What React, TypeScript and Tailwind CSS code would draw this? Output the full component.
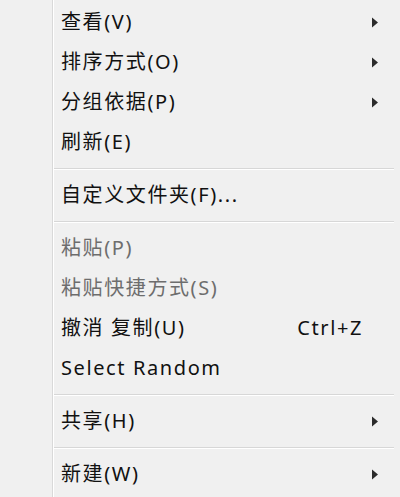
import React from 'react'

type Item =
  | { kind: 'item'; label: string; sub?: boolean; disabled?: boolean; shortcut?: string }
  | { kind: 'sep' }

const MENU: Item[] = [
  { kind: 'item', label: '查看(V)', sub: true },
  { kind: 'item', label: '排序方式(O)', sub: true },
  { kind: 'item', label: '分组依据(P)', sub: true },
  { kind: 'item', label: '刷新(E)' },
  { kind: 'sep' },
  { kind: 'item', label: '自定义文件夹(F)...' },
  { kind: 'sep' },
  { kind: 'item', label: '粘贴(P)', disabled: true },
  { kind: 'item', label: '粘贴快捷方式(S)', disabled: true },
  { kind: 'item', label: '撤消 复制(U)', shortcut: 'Ctrl+Z' },
  { kind: 'item', label: 'Select Random' },
  { kind: 'sep' },
  { kind: 'item', label: '共享(H)', sub: true },
  { kind: 'sep' },
  { kind: 'item', label: '新建(W)', sub: true },
]

function Arrow() {
  return (
    <svg width="8" height="11" viewBox="0 0 8 11" className="shrink-0">
      <path d="M1 0.5 L7 5.5 L1 10.5 Z" fill="#2b2b2b" />
    </svg>
  )
}

export default function App() {
  return (
    <div
      className="w-[400px] h-[497px] bg-[#f0f0f0] flex overflow-hidden"
      style={{ fontFamily: '"Noto Sans", "Noto Sans CJK SC", sans-serif' }}
    >
      {/* icon gutter */}
      <div className="w-[53px] shrink-0 border-r border-[#d9d9d9]" />
      <div className="flex-1 min-w-0 border-l border-white pt-[2px]">
        {MENU.map((it, i) =>
          it.kind === 'sep' ? (
            <div key={i} className="h-[13px] flex items-center pr-[6px]">
              <div className="w-full h-[2px] border-t border-[#d7d7d7] border-b border-b-white" />
            </div>
          ) : (
            <div key={i} className="h-10 flex items-center pl-[7px] pr-[21px]">
              <span
                className={
                  'flex-1 text-[20px] leading-none tracking-[1.6px] whitespace-nowrap ' +
                  (it.disabled ? 'text-[#6d6d6d]' : 'text-[#111]')
                }
              >
                {it.label}
              </span>
              {it.shortcut && (
                <span className="text-[20px] leading-none tracking-[1.6px] text-[#111] mr-[16px]">{it.shortcut}</span>
              )}
              {it.sub && <Arrow />}
            </div>
          )
        )}
      </div>
    </div>
  )
}
